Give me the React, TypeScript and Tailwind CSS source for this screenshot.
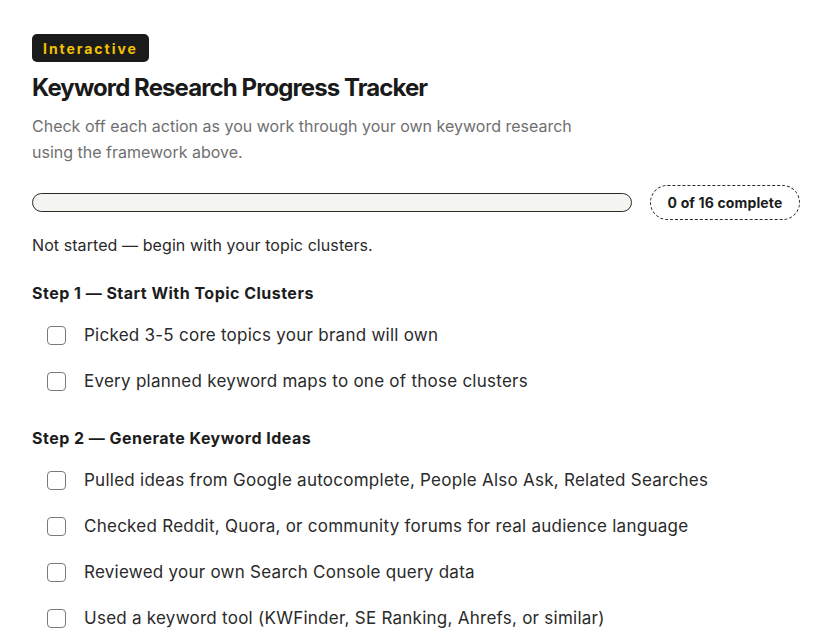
import { useState } from "react";

type Step = { title: string; items: string[] };

const steps: Step[] = [
  {
    title: "Step 1 — Start With Topic Clusters",
    items: [
      "Picked 3-5 core topics your brand will own",
      "Every planned keyword maps to one of those clusters",
    ],
  },
  {
    title: "Step 2 — Generate Keyword Ideas",
    items: [
      "Pulled ideas from Google autocomplete, People Also Ask, Related Searches",
      "Checked Reddit, Quora, or community forums for real audience language",
      "Reviewed your own Search Console query data",
      "Used a keyword tool (KWFinder, SE Ranking, Ahrefs, or similar)",
    ],
  },
];

const TOTAL = 16;

const App = () => {
  const [checked, setChecked] = useState<Record<string, boolean>>({});
  const done = Object.values(checked).filter(Boolean).length;

  const toggle = (key: string) =>
    setChecked((prev) => ({ ...prev, [key]: !prev[key] }));

  return (
    <div className="min-h-screen bg-white font-['Inter','Liberation_Sans',sans-serif] text-[#1c1c1c]">
      <div className="pl-8 pr-[30px] pt-[34px]">
        {/* Badge */}
        <span className="inline-flex h-7 items-center rounded-[5px] bg-[#1b1b1b] px-[11px] text-[14px] font-bold tracking-[0.14em] text-[#f2c200]">
          Interactive
        </span>

        {/* Heading */}
        <h2 className="mt-[11px] text-[24px] font-bold leading-[30px] tracking-[-0.038em] text-[#1a1a1a]">
          Keyword Research Progress Tracker
        </h2>
        <p className="mt-[10px] max-w-[570px] text-[16px] leading-[26px] text-[#6f6f6f]">
          Check off each action as you work through your own keyword research
          using the framework above.
        </p>

        {/* Progress */}
        <div className="mt-[20px] flex items-center gap-[18px]">
          <div className="h-[19px] min-w-0 flex-1 overflow-hidden rounded-full border border-[#2a2a2a] bg-[#f4f4f0]">
            <div
              className="h-full bg-[#1b1b1b]"
              style={{ width: `${(done / TOTAL) * 100}%` }}
            />
          </div>
          <span className="inline-flex h-[35px] w-[150px] shrink-0 items-center justify-center whitespace-nowrap rounded-full border border-dashed border-[#2a2a2a] text-[14px] font-bold tracking-[0.01em] text-[#1c1c1c]">
            {done} of {TOTAL} complete
          </span>
        </div>

        <p className="mt-[13px] text-[16px] leading-[24px] tracking-[0.005em] text-[#2a2a2a]">
          Not started — begin with your topic clusters.
        </p>

        {/* Checklist */}
        {steps.map((step, si) => (
          <div key={step.title} className={si === 0 ? "mt-[25px]" : "mt-[33px]"}>
            <h3 className="text-[16px] font-bold leading-[22px] tracking-[0.03em] text-[#1c1c1c]">
              {step.title}
            </h3>
            <ul className="mt-[18px] flex flex-col gap-[20px] pl-[15px]">
              {step.items.map((item) => {
                const key = `${si}-${item}`;
                return (
                  <li key={key}>
                    <label className="flex cursor-pointer items-center gap-[18px]">
                      <span
                        onClick={() => toggle(key)}
                        className={`h-[19px] w-[19px] shrink-0 rounded-[4px] border-[1.5px] border-[#7a7a7a] ${
                          checked[key] ? "bg-[#1b1b1b]" : "bg-white"
                        }`}
                      />
                      <span className="text-[17px] leading-[26px] tracking-[0.015em] text-[#2a2a2a]">
                        {item}
                      </span>
                    </label>
                  </li>
                );
              })}
            </ul>
          </div>
        ))}
      </div>
    </div>
  );
};

export default App;
